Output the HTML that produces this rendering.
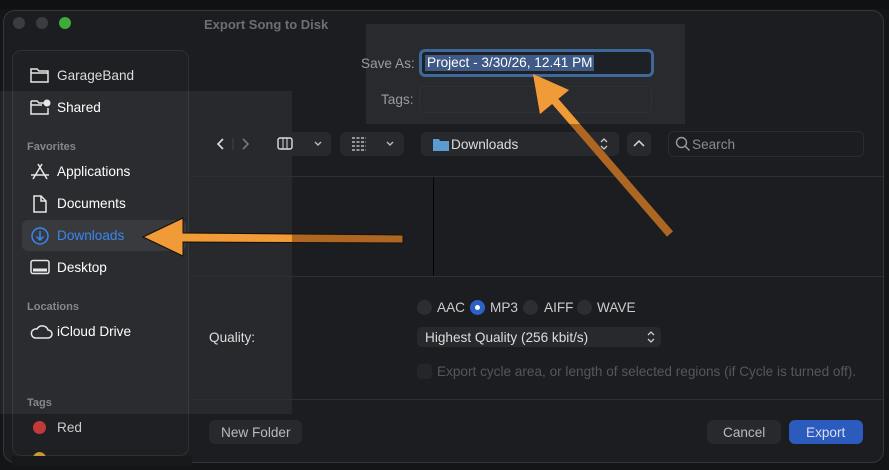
<!DOCTYPE html>
<html><head><meta charset="utf-8"><style>
*{margin:0;padding:0;box-sizing:border-box}
body{width:889px;height:470px;background:#141517;font-family:"Liberation Sans",sans-serif;position:relative;overflow:hidden;color:#dcdcdc}
.a{position:absolute}
.win{left:3px;top:10px;width:881px;height:453px;background:#1b1d20;border:1px solid #34363a;border-radius:12px}
.t{font-size:13.6px;white-space:nowrap}
.side{left:12px;top:50px;width:177px;height:406px;background:#1e2023;border:1px solid #2e3034;border-radius:9px}
.hd{font-size:11px;font-weight:bold;color:#85878a}
.btn{background:#27292d;border-radius:6px}
.line{height:1px;background:#2c2e32}
.rad{width:15px;height:15px;border-radius:50%;background:#2c2e32}
.ic{stroke:#e6e6e6;fill:none;stroke-width:1.5}
</style></head><body>
<div class="a win"></div>
<div class="a" style="left:0;top:0;width:889px;height:9px;background:#101113"></div>
<div class="a" style="left:13px;top:17px;width:12px;height:12px;border-radius:50%;background:#3a3c3f"></div>
<div class="a" style="left:36px;top:17px;width:12px;height:12px;border-radius:50%;background:#3a3c3f"></div>
<div class="a" style="left:59px;top:17px;width:12px;height:12px;border-radius:50%;background:#3daa3a"></div>
<div class="a" style="left:204px;top:17px;font-size:13px;font-weight:bold;color:#6d6f72;white-space:nowrap">Export Song to Disk</div>

<div class="a side"></div>
<div class="a" style="left:0;top:91px;width:292px;height:323px;background:rgba(255,255,255,0.055)"></div>
<div class="a" style="left:366px;top:24px;width:319px;height:100px;background:rgba(255,255,255,0.06)"></div>

<svg class="a" style="left:29px;top:66px" width="22" height="18"><path class="ic" d="M2 3h6l2 2h9v11H2z M2 7h17"/></svg>
<div class="a t" style="left:57px;top:68px">GarageBand</div>
<svg class="a" style="left:29px;top:98px" width="22" height="18"><path class="ic" d="M2 3h6l2 2h5 M19 10v6H2V3 M2 7h11"/><circle cx="18" cy="5" r="3.5" fill="#e6e6e6"/></svg>
<div class="a t" style="left:57px;top:100px;color:#fff">Shared</div>
<div class="a hd" style="left:27px;top:141px">Favorites</div>
<svg class="a" style="left:30px;top:162px" width="20" height="18"><path class="ic" d="M8 2l9 15 M12 2L3 17 M1 13h18"/></svg>
<div class="a t" style="left:57px;top:164px;color:#fff">Applications</div>
<svg class="a" style="left:32px;top:194px" width="16" height="20"><path class="ic" d="M2 2h7l5 5v11H2z M9 2v5h5"/></svg>
<div class="a t" style="left:57px;top:196px;color:#fff">Documents</div>
<div class="a" style="left:22px;top:220px;width:164px;height:31px;background:#383a3e;border-radius:6px"></div>
<svg class="a" style="left:30px;top:226px" width="20" height="20"><circle cx="10" cy="10" r="8" stroke="#3a86f0" fill="none" stroke-width="1.5"/><path d="M10 5v9 M6.5 10.5L10 14l3.5-3.5" stroke="#3a86f0" fill="none" stroke-width="1.5"/></svg>
<div class="a t" style="left:57px;top:228px;color:#3a86f0">Downloads</div>
<svg class="a" style="left:30px;top:259px" width="20" height="17"><rect class="ic" x="1" y="1.5" width="18" height="13" rx="2"/><path d="M3 11h14" stroke="#e6e6e6" stroke-width="3"/></svg>
<div class="a t" style="left:57px;top:260px;color:#fff">Desktop</div>
<div class="a hd" style="left:27px;top:301px">Locations</div>
<svg class="a" style="left:29px;top:322px" width="24" height="18"><path class="ic" d="M6 16h13a4 4 0 0 0 0-8 6 6 0 0 0-11-1 4.5 4.5 0 0 0-2 9z"/></svg>
<div class="a t" style="left:57px;top:324px;color:#fff">iCloud Drive</div>
<div class="a hd" style="left:27px;top:397px">Tags</div>
<div class="a" style="left:33px;top:421px;width:13px;height:13px;border-radius:50%;background:#c23a37"></div>
<div class="a t" style="left:57px;top:420px;color:#ccc">Red</div>
<div class="a" style="left:33px;top:452px;width:13px;height:13px;border-radius:50%;background:#c49a32"></div>
<div class="a" style="left:12px;top:456px;width:180px;height:10px;background:#17181a"></div>

<div class="a t" style="left:361px;top:56px;color:#9a9c9f">Save As:</div>
<div class="a" style="left:419px;top:49px;width:235px;height:28px;border:3px solid #3d6899;border-radius:6px;background:#1d2024"></div>
<div class="a t" style="left:425px;top:55px;background:#3f5a86;color:#fff;padding:0 2px;line-height:16px">Project - 3/30/26, 12.41 PM</div>
<div class="a t" style="left:381px;top:92px;color:#9a9c9f">Tags:</div>
<div class="a" style="left:419px;top:86px;width:233px;height:27px;border:1px solid #2e3135;border-radius:5px"></div>

<div class="a btn" style="left:210px;top:132px;width:47px;height:24px"></div>
<svg class="a" style="left:210px;top:132px" width="47" height="24"><path d="M13 7l-5 5 5 5" stroke="#ddd" fill="none" stroke-width="1.6"/><path d="M23 6v12" stroke="#444" /><path d="M33 7l5 5-5 5" stroke="#777" fill="none" stroke-width="1.6"/></svg>
<div class="a btn" style="left:265px;top:132px;width:66px;height:24px"></div>
<svg class="a" style="left:265px;top:132px" width="66" height="24"><rect x="13" y="6" width="14" height="11" rx="2" stroke="#ddd" fill="none" stroke-width="1.4"/><path d="M18 6v11 M22 6v11" stroke="#ddd"/><path d="M50 10l3 3 3-3" stroke="#bbb" fill="none" stroke-width="1.4"/></svg>
<div class="a btn" style="left:340px;top:132px;width:64px;height:24px"></div>
<svg class="a" style="left:340px;top:132px" width="64" height="24"><path d="M12 6h14 M12 10h14 M12 14h14 M12 18h14" stroke="#bbb" stroke-width="1.6" stroke-dasharray="3 1.5"/><path d="M47 10l3 3 3-3" stroke="#bbb" fill="none" stroke-width="1.4"/></svg>
<div class="a btn" style="left:421px;top:132px;width:198px;height:24px"></div>
<svg class="a" style="left:433px;top:137px" width="16" height="14"><path d="M0 2h6l1 2h9v10H0z" fill="#5b9bd0"/></svg>
<div class="a t" style="left:451px;top:137px;color:#ddd">Downloads</div>
<svg class="a" style="left:598px;top:136px" width="12" height="16"><path d="M3 6l3-3 3 3 M3 10l3 3 3-3" stroke="#ccc" fill="none" stroke-width="1.3"/></svg>
<div class="a btn" style="left:627px;top:132px;width:24px;height:24px"></div>
<svg class="a" style="left:627px;top:132px" width="24" height="24"><path d="M7 14l5-5 5 5" stroke="#ddd" fill="none" stroke-width="1.5"/></svg>
<div class="a" style="left:668px;top:131px;width:196px;height:26px;border:1px solid #2a2c30;border-radius:6px"></div>
<svg class="a" style="left:675px;top:136px" width="16" height="16"><circle cx="6.5" cy="6.5" r="5" stroke="#999" fill="none" stroke-width="1.4"/><path d="M10 10l4.5 4.5" stroke="#999" stroke-width="1.5"/></svg>
<div class="a t" style="left:692px;top:137px;color:#8a8c8f">Search</div>

<div class="a line" style="left:190px;top:176px;width:693px"></div>
<div class="a" style="left:433px;top:177px;width:1px;height:99px;background:#050505"></div>
<div class="a line" style="left:190px;top:276px;width:693px"></div>
<div class="a line" style="left:190px;top:399px;width:693px"></div>

<div class="a rad" style="left:417px;top:300px"></div>
<div class="a t" style="left:437px;top:300px;color:#ccc">AAC</div>
<div class="a rad" style="left:470px;top:300px;background:#2c62c6"></div>
<div class="a" style="left:475px;top:305px;width:5px;height:5px;border-radius:50%;background:#fff"></div>
<div class="a t" style="left:490px;top:300px;color:#ccc">MP3</div>
<div class="a rad" style="left:523px;top:300px"></div>
<div class="a t" style="left:544px;top:300px;color:#ccc">AIFF</div>
<div class="a rad" style="left:577px;top:300px"></div>
<div class="a t" style="left:597px;top:300px;color:#ccc">WAVE</div>
<div class="a t" style="left:209px;top:330px;color:#ddd">Quality:</div>
<div class="a btn" style="left:417px;top:327px;width:244px;height:20px;border-radius:5px"></div>
<div class="a t" style="left:425px;top:330px;color:#ddd">Highest Quality (256 kbit/s)</div>
<svg class="a" style="left:645px;top:329px" width="12" height="16"><path d="M3 6l3-3 3 3 M3 10l3 3 3-3" stroke="#ccc" fill="none" stroke-width="1.3"/></svg>
<div class="a" style="left:417px;top:364px;width:15px;height:15px;border-radius:4px;background:#24262a"></div>
<div class="a t" style="left:437px;top:364px;color:#55575a">Export cycle area, or length of selected regions (if Cycle is turned off).</div>

<div class="a btn" style="left:209px;top:420px;width:93px;height:24px"></div>
<div class="a t" style="left:221px;top:425px;color:#bbb">New Folder</div>
<div class="a btn" style="left:707px;top:420px;width:74px;height:24px"></div>
<div class="a t" style="left:723px;top:425px;color:#bbb">Cancel</div>
<div class="a" style="left:789px;top:420px;width:74px;height:24px;border-radius:6px;background:#2a5bbd"></div>
<div class="a t" style="left:806px;top:425px;color:#dde">Export</div>

<svg class="a" style="left:0;top:0" width="889" height="470">
<defs><clipPath id="c"><rect x="0" y="91" width="292" height="323"/><rect x="366" y="24" width="319" height="100"/></clipPath></defs>
<g fill="#ad6722" stroke="#ad6722">
<polygon points="143,237 183,218 183,233 403,235 403,243 183,242 183,256" stroke="#1a1008" stroke-width="1"/>
<line x1="554" y1="100" x2="670" y2="234" stroke-width="8"/>
<polygon points="533,74 540,114 569,90" stroke="none"/>
</g>
<g fill="#f09a38" stroke="#f09a38" clip-path="url(#c)">
<polygon points="143,237 183,218 183,233 403,235 403,243 183,242 183,256" stroke="#1a1008" stroke-width="1"/>
<line x1="554" y1="100" x2="670" y2="234" stroke-width="8"/>
<polygon points="533,74 540,114 569,90" stroke="none"/>
</g>
</svg>
</body></html>
